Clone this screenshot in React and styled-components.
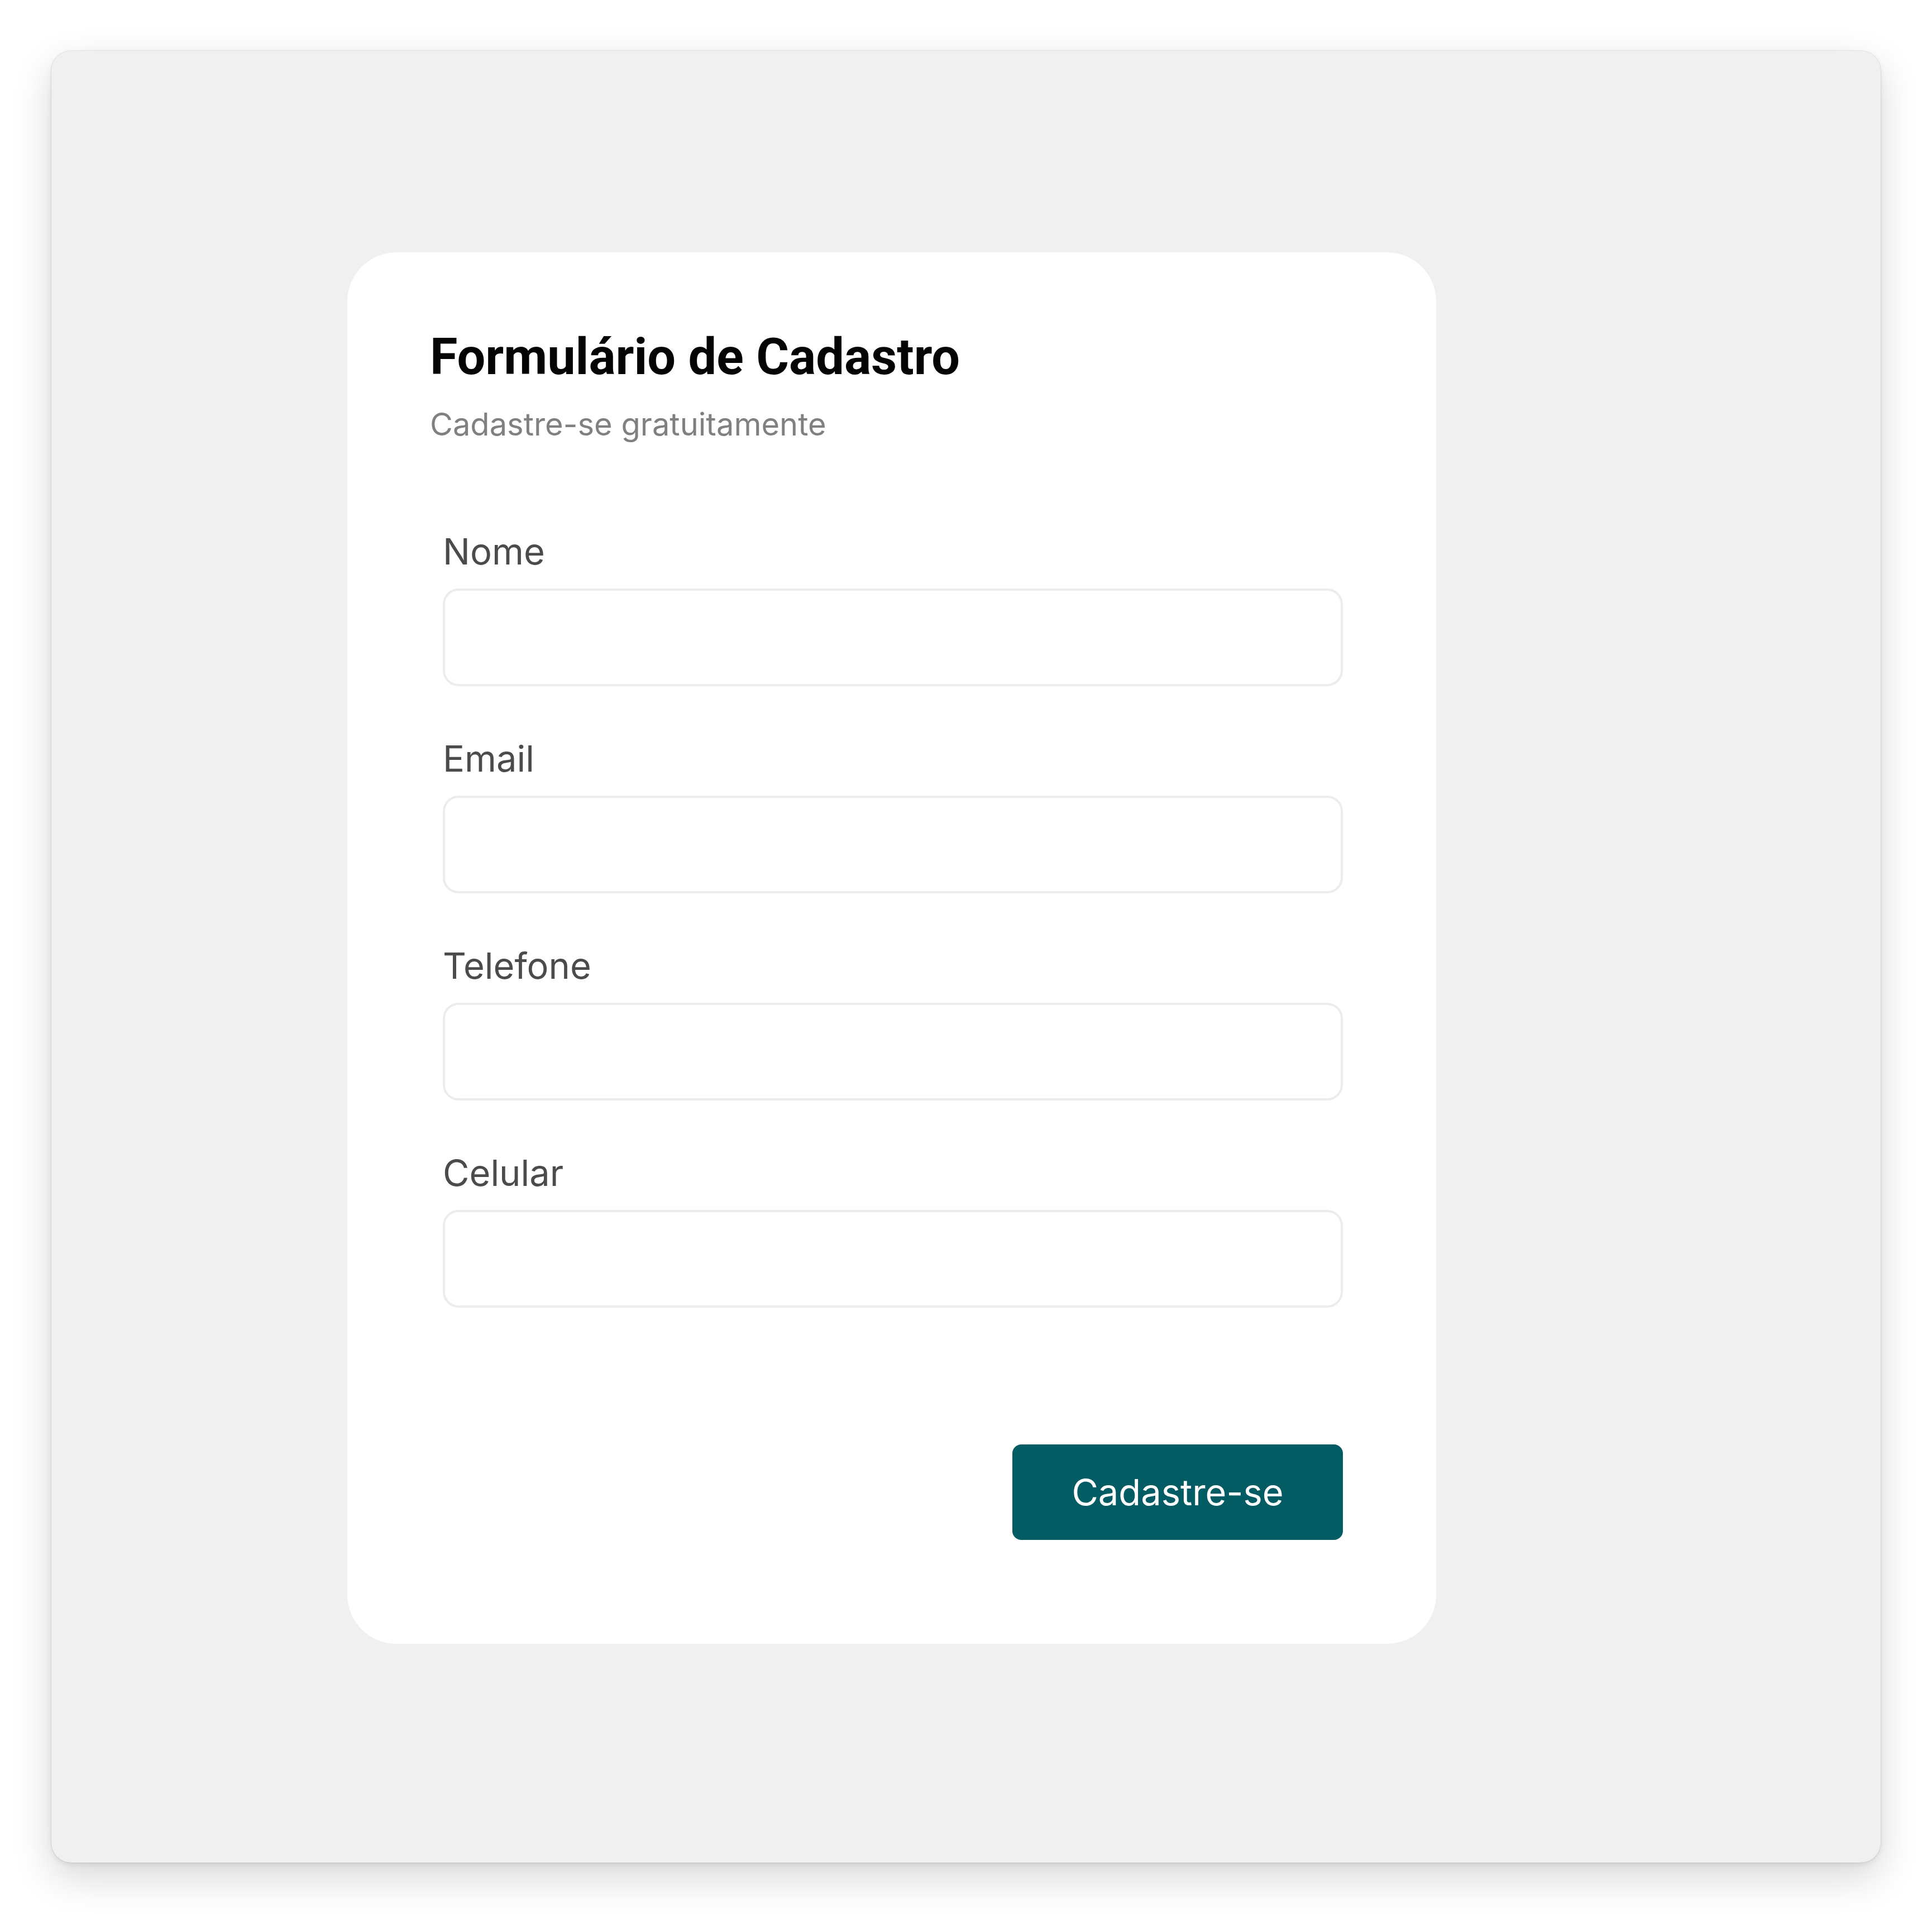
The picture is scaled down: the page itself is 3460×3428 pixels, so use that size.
import React from 'react';
import styled, { createGlobalStyle } from 'styled-components';

const fields = [ 'Nome', 'Email', 'Telefone', 'Celular' ];

const GlobalStyle = createGlobalStyle`
  html, body {
    margin: 0;
    padding: 0;
    background: #ffffff;
  }
  * {
    box-sizing: border-box;
  }
`;

export default function App() {
  return (
    <>
      <GlobalStyle/>
      <Page>
        <Window>
          <Card>
            <Title>Formulário de Cadastro</Title>
            <Subtitle>Cadastre-se gratuitamente</Subtitle>
            <Form onSubmit={ e => e.preventDefault() }>
              { fields.map( name => (
                <Field key={ name }>
                  <Label htmlFor={ name }>{ name }</Label>
                  <Input id={ name } type="text"/>
                </Field>
              ) ) }
              <Actions>
                <Button type="submit">Cadastre-se</Button>
              </Actions>
            </Form>
          </Card>
        </Window>
      </Page>
    </>
  );
}

const Page = styled.div`
  width: 3460px;
  height: 3428px;
  padding: 91px 92px 92px 92px;
`;

const Window = styled.div`
  width: 100%;
  height: 100%;
  display: flex;
  align-items: flex-start;
  padding: 361px 0 0 530px;
  background: #f0f0f0;
  border-radius: 36px;
  box-shadow: 0 0 0 1px rgba(0, 0, 0, 0.07),
    0 4px 10px rgba(0, 0, 0, 0.08),
    0 26px 70px rgba(0, 0, 0, 0.16);
`;

const Card = styled.div`
  width: 1950px;
  height: 2492px;
  display: flex;
  flex-direction: column;
  padding: 134px 167px 0 148px;
  background: #ffffff;
  border-radius: 88px;
`;

const Title = styled.h1`
  margin: 0;
  font-family: Roboto, "Noto Sans", sans-serif;
  font-weight: 700;
  font-size: 90px;
  line-height: 1.2;
  color: #050505;
`;

const Subtitle = styled.p`
  margin: 33px 0 0;
  font-family: Inter, "Noto Sans", sans-serif;
  font-size: 56px;
  line-height: 1.2;
  color: #808080;
`;

const Form = styled.form`
  display: flex;
  flex-direction: column;
  gap: 91px;
  margin: 155px 0 0 23px;
`;

const Field = styled.div`
  display: flex;
  flex-direction: column;
`;

const Label = styled.label`
  margin-bottom: 27px;
  font-family: Inter, "Noto Sans", sans-serif;
  font-size: 65px;
  line-height: 1.2;
  color: #4b4b4b;
`;

const Input = styled.input`
  width: 100%;
  height: 175px;
  padding: 0 40px;
  border: 4px solid #ececec;
  border-radius: 28px;
  background: #ffffff;
  font-family: Inter, sans-serif;
  font-size: 60px;
  outline: none;
`;

const Actions = styled.div`
  display: flex;
  justify-content: flex-end;
  margin-top: 154px;
`;

const Button = styled.button`
  width: 592px;
  height: 171px;
  border: none;
  border-radius: 16px;
  background: #035c63;
  color: #ffffff;
  font-family: Inter, "Noto Sans", sans-serif;
  font-size: 65px;
  cursor: pointer;
`;
